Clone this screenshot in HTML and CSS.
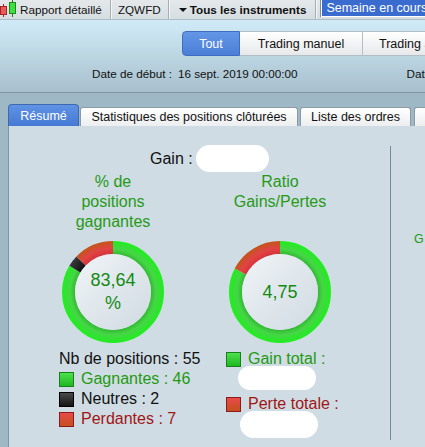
FILE: index.html
```html
<!DOCTYPE html>
<html lang="fr">
<head>
  <meta charset="UTF-8">
  <meta name="viewport" content="width=device-width, initial-scale=1.0">
  <title>Rapport détaillé</title>
  <link rel="stylesheet" href="styles.css">
</head>
<body>
  <div class="toolbar">
    <span class="tb-item tb-report">
      <svg class="candles" width="17" height="19" viewBox="0 0 17 19">
        <line x1="3.5" y1="4" x2="3.5" y2="17" stroke="#9a2a2a" />
        <rect x="0.5" y="6.5" width="6" height="8" fill="#ea5a5a" stroke="#a52525" />
        <line x1="12.5" y1="0" x2="12.5" y2="17" stroke="#1f7a1f" />
        <rect x="9.5" y="2.5" width="6" height="11" fill="#3ee03e" stroke="#1d8a1d" />
      </svg>
      Rapport détaillé
    </span>
    <span class="tb-item tb-code">ZQWFD</span>
    <span class="tb-item tb-bold"><span class="caret"></span>Tous les instruments</span>
    <span class="tb-period">Semaine en cours</span>
  </div>

  <div class="header">
    <div class="seg">
      <span class="seg-btn active">Tout</span>
      <span class="seg-btn manual">Trading manuel</span>
      <span class="seg-btn">Trading automatique</span>
    </div>
    <div class="dates">
      <span>Date de début :</span>
      <span class="date-val">16 sept. 2019 00:00:00</span>
      <span class="date-end">Date de fin :</span>
    </div>
  </div>

  <div class="main">
    <div class="tabs">
      <span class="tab active">Résumé</span>
      <span class="tab tab-stats">Statistiques des positions clôturées</span>
      <span class="tab tab-orders">Liste des ordres</span>
      <span class="tab tab-more">Liste des positions</span>
    </div>

    <div class="panel">
      <div class="summary">
        <div class="gain">Gain : <span class="blob blob-gain"></span></div>

        <div class="cols">
          <div class="col">
            <div class="title">% de<br>positions<br>gagnantes</div>
            <div class="donut">
              <svg width="104" height="104" viewBox="0 0 104 104">
                <defs>
                  <radialGradient id="g-green" gradientUnits="userSpaceOnUse" cx="52" cy="52" r="51">
                    <stop offset="0.74" stop-color="#31b931" />
                    <stop offset="0.84" stop-color="#46d646" />
                    <stop offset="0.95" stop-color="#2ce52c" />
                    <stop offset="1" stop-color="#1ef01e" />
                  </radialGradient>
                  <radialGradient id="g-red" gradientUnits="userSpaceOnUse" cx="52" cy="52" r="51">
                    <stop offset="0.74" stop-color="#d8323a" />
                    <stop offset="0.86" stop-color="#e04444" />
                    <stop offset="1" stop-color="#c2551a" />
                  </radialGradient>
                  <radialGradient id="g-black" gradientUnits="userSpaceOnUse" cx="52" cy="52" r="51">
                    <stop offset="0.74" stop-color="#111" />
                    <stop offset="1" stop-color="#3a3a3a" />
                  </radialGradient>
                  <linearGradient id="g-inner" x1="0" y1="0" x2="1" y2="1">
                    <stop offset="0" stop-color="#f0f4f7" />
                    <stop offset="1" stop-color="#cfdae1" />
                  </linearGradient>
                </defs>
                <g transform="rotate(-90 52 52)" fill="none" stroke-width="13">
                  <circle cx="52" cy="52" r="44.5" pathLength="100" stroke="url(#g-green)" stroke-dasharray="83.64 100" />
                  <circle cx="52" cy="52" r="44.5" pathLength="100" stroke="url(#g-black)" stroke-dasharray="3.64 100" stroke-dashoffset="-83.64" />
                  <circle cx="52" cy="52" r="44.5" pathLength="100" stroke="url(#g-red)" stroke-dasharray="12.72 100" stroke-dashoffset="-87.28" />
                </g>
                <circle cx="52" cy="52" r="38" fill="url(#g-inner)" />
              </svg>
              <div class="donut-label">83,64<br>%</div>
            </div>
            <div class="legend legend-left">
              <div class="row">Nb de positions : 55</div>
              <div class="row win"><span class="sq sq-green"></span>Gagnantes : 46</div>
              <div class="row"><span class="sq sq-black"></span>Neutres : 2</div>
              <div class="row loss"><span class="sq sq-red"></span>Perdantes : 7</div>
            </div>
          </div>

          <div class="col">
            <div class="title">Ratio<br>Gains/Pertes</div>
            <div class="donut">
              <svg width="104" height="104" viewBox="0 0 104 104">
                <g transform="rotate(-90 52 52)" fill="none" stroke-width="13">
                  <circle cx="52" cy="52" r="44.5" pathLength="100" stroke="url(#g-green)" stroke-dasharray="82.61 100" />
                  <circle cx="52" cy="52" r="44.5" pathLength="100" stroke="url(#g-red)" stroke-dasharray="17.39 100" stroke-dashoffset="-82.61" />
                </g>
                <circle cx="52" cy="52" r="38" fill="url(#g-inner)" />
              </svg>
              <div class="donut-label">4,75</div>
            </div>
            <div class="legend legend-right">
              <div class="row win"><span class="sq sq-green"></span>Gain total :</div>
              <span class="blob blob-total"></span>
              <div class="row loss"><span class="sq sq-red"></span>Perte totale :</div>
              <span class="blob blob-loss"></span>
            </div>
          </div>
        </div>
      </div>

      <div class="side">
        <div class="side-text">G</div>
      </div>
    </div>
  </div>
</body>
</html>
```

FILE: styles.css
```css
body {
  margin: 0;
  width: 425px;
  height: 447px;
  overflow: hidden;
  font-family: "Liberation Sans", Arial, sans-serif;
  background: #9fb8c5;
}
.toolbar {
  height: 19px;
  display: flex;
  align-items: center;
  background: linear-gradient(#e4e8eb, #d6dde1);
  border-bottom: 1px solid #aebbc3;
  font-size: 11.7px;
  color: #111;
  white-space: nowrap;
  overflow: hidden;
}
.tb-item {
  height: 19px;
  display: flex;
  align-items: center;
  flex-shrink: 0;
  border-right: 1px solid #a3adb4;
  box-shadow: 1px 0 0 #f4f6f7;
}
.tb-report {
  gap: 3px;
  padding-right: 8px;
}
.candles {
  display: block;
}
.tb-code {
  padding: 0 7px 0 7px;
}
.tb-bold {
  font-weight: bold;
  padding: 0 9px 0 10px;
}
.caret {
  width: 0;
  height: 0;
  border-left: 4px solid transparent;
  border-right: 4px solid transparent;
  border-top: 4px solid #111;
  margin-right: 3px;
}
.tb-period {
  margin-left: 5px;
  height: 16px;
  margin-top: -2px;
  padding-left: 4px;
  flex: 1;
  display: flex;
  align-items: center;
  background: #3a6ccf;
  color: #fff;
  font-size: 12.5px;
  border: 1px solid #fff;
  border-top: none;
  box-shadow: -1px 0 0 #7c8fa0;
}

.header {
  height: 72px;
  background: linear-gradient(#d0ebf7, #a8c0cd);
  border-bottom: 1px solid #7f97a4;
  white-space: nowrap;
  overflow: hidden;
}
.seg {
  display: flex;
  padding: 11px 0 0 182px;
}
.seg-btn {
  height: 25px;
  box-sizing: border-box;
  display: flex;
  align-items: center;
  justify-content: center;
  flex-shrink: 0;
  font-size: 12.5px;
  color: #111;
  background: linear-gradient(#ffffff, #e6e8ea);
  border: 1px solid #b4bec6;
  border-left: none;
  padding: 0 16px;
}
.seg-btn.active {
  width: 58px;
  padding: 0;
  color: #fff;
  background: linear-gradient(#6396e6, #4b7fd6);
  border: 1px solid #3f6cc0;
  border-radius: 4px 0 0 4px;
}
.seg-btn.manual {
  width: 123px;
  padding: 0;
}
.dates {
  display: flex;
  margin-top: 11px;
  padding-left: 92px;
  font-size: 11.7px;
  line-height: 14px;
  color: #111;
}
.date-val {
  margin-left: 6px;
}
.date-end {
  margin-left: 109px;
}

.main {
  padding-top: 11px;
}
.tabs {
  display: flex;
  align-items: flex-end;
  height: 22px;
  padding-left: 8px;
  white-space: nowrap;
  overflow: hidden;
}
.tab {
  height: 19px;
  box-sizing: border-box;
  display: flex;
  align-items: center;
  justify-content: center;
  flex-shrink: 0;
  font-size: 12.5px;
  color: #111;
  background: linear-gradient(#ffffff, #eceeef);
  border: 1px solid #8a9ba6;
  border-bottom: none;
  border-radius: 3px 3px 0 0;
  margin-left: 2px;
}
.tab.active {
  width: 71px;
  height: 22px;
  margin-left: 0;
  color: #fff;
  background: linear-gradient(#5f93e4, #4679d4);
  border-color: #4068b0;
  border-radius: 4px 4px 0 0;
}
.tab-stats {
  width: 218px;
  margin-left: 1px;
}
.tab-orders {
  width: 111px;
}
.tab-more {
  width: 130px;
  margin-left: 3px;
}

.panel {
  display: flex;
  height: 321px;
  margin-left: 8px;
  background: #cfdce3;
  border-left: 1px solid #7f97a4;
}
.summary {
  width: 381px;
  padding-top: 19px;
  flex-shrink: 0;
}
.gain {
  height: 27px;
  display: flex;
  align-items: center;
  padding-left: 141px;
  font-size: 16px;
  color: #111;
}
.blob {
  display: block;
  background: #fff;
  border-radius: 14px;
}
.blob-gain {
  width: 73px;
  height: 27px;
  margin-left: 3px;
}
.cols {
  display: grid;
  grid-template-columns: 166px 168px;
  margin-left: 21px;
}
.col {
  font-size: 16px;
}
.title {
  height: 60px;
  line-height: 20px;
  text-align: center;
  color: #259a17;
}
.donut {
  position: relative;
  width: 104px;
  height: 104px;
  margin: 8px auto 0;
}
.donut svg {
  display: block;
}
.donut-label {
  position: absolute;
  inset: 0;
  display: flex;
  align-items: center;
  justify-content: center;
  text-align: center;
  font-size: 18px;
  line-height: 23px;
  color: #138a13;
}
.legend {
  margin-top: 5px;
  line-height: 20px;
  color: #111;
}
.legend-left {
  padding-left: 29px;
}
.legend-right {
  padding-left: 30px;
}
.row {
  display: flex;
  align-items: center;
  gap: 7px;
  white-space: nowrap;
}
.win {
  color: #1f9a12;
}
.loss {
  color: #a01616;
}
.sq {
  width: 15px;
  height: 15px;
  box-sizing: border-box;
  flex-shrink: 0;
}
.sq-green {
  background: linear-gradient(#4ee04e, #1fb81f);
  border: 1px solid #17801a;
}
.sq-black {
  background: linear-gradient(#4a4a4a, #141414);
  border: 1px solid #000;
}
.sq-red {
  background: linear-gradient(#e84a4a, #c4501e);
  border: 1px solid #8c1a1a;
}
.blob-total {
  width: 78px;
  height: 24px;
  margin: -3px 0 4px 12px;
}
.blob-loss {
  width: 78px;
  height: 27px;
  margin: -3px 0 0 14px;
}

.side {
  flex: 1;
  margin-top: 20px;
  height: 294px;
  border-left: 1px solid #75899a;
  padding: 86px 0 0 23px;
  box-sizing: border-box;
  overflow: hidden;
}
.side-text {
  font-size: 12.5px;
  line-height: 14px;
  color: #259a17;
}
```
